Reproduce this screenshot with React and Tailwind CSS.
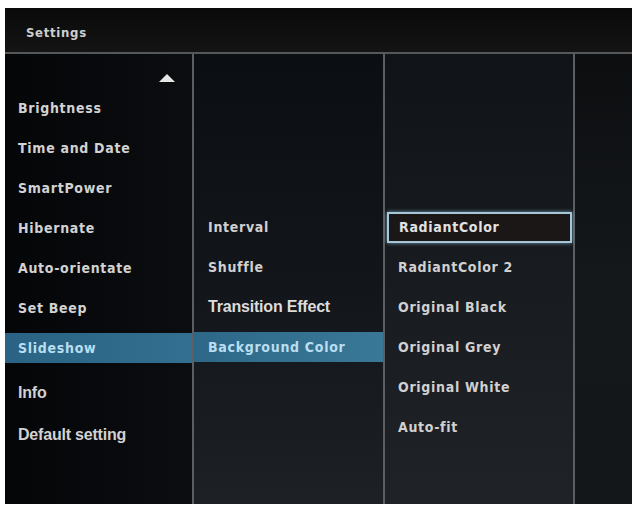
const main = [
  'Brightness',
  'Time and Date',
  'SmartPower',
  'Hibernate',
  'Auto-orientate',
  'Set Beep',
];

const sub = ['Interval', 'Shuffle'];

const colors = ['RadiantColor 2', 'Original Black', 'Original Grey', 'Original White', 'Auto-fit'];

const dv = { fontFamily: '"DejaVu Sans Condensed", "DejaVu Sans", sans-serif', fontStretch: 'condensed' };
const lib = { fontFamily: '"Liberation Sans", Arial, sans-serif' };

const Row = ({ children, className = '' }) => (
  <div className={`h-[30px] flex items-center ${className}`}>{children}</div>
);

export default function App() {
  return (
    <div className="w-[637px] h-[506px] bg-white pt-[8px] pl-[5px]">
      <div className="w-[627px] h-[496px] flex flex-col bg-[#0b0c0e] overflow-hidden">
        {/* header */}
        <div className="h-[46px] flex items-center pl-[21px] pt-[6px] bg-gradient-to-b from-[#0a0a0a] to-[#141414] border-b-2 border-[#55585b]">
          <span className="text-[13px] font-bold tracking-[0.7px] text-[#cfcfcf]" style={dv}>
            Settings
          </span>
        </div>

        <div className="flex flex-1">
          {/* main menu */}
          <div className="w-[189px] flex flex-col bg-gradient-to-r from-[#050608] to-[#0b0d10] border-r-2 border-[#5c5f62] text-[14px] font-bold tracking-[0.7px] text-[#d2d2d2]">
            <div className="h-[39px] flex items-center justify-end pr-[17px] pt-[8px]">
              <div className="w-0 h-0 border-l-[8px] border-r-[8px] border-b-[8px] border-l-transparent border-r-transparent border-b-[#e6e6e6]" />
            </div>
            <div className="flex flex-col gap-[10px]" style={dv}>
              {main.map((t) => (
                <Row key={t} className="pl-[13px]">{t}</Row>
              ))}
              <Row className="pl-[13px] bg-gradient-to-r from-[#2a6384] to-[#336f90] text-[#b9def0]">
                Slideshow
              </Row>
            </div>
            <Row className="pl-[13px] mt-[15px] text-[16px] tracking-[-0.2px]">
              <span style={lib}>Info</span>
            </Row>
            <Row className="pl-[13px] mt-[12px] text-[16px] tracking-[-0.2px]">
              <span style={lib}>Default setting</span>
            </Row>
          </div>

          {/* submenu */}
          <div className="w-[191px] flex flex-col pt-[158px] gap-[10px] bg-gradient-to-b from-[#0b0e13] via-[#12151a] to-[#1d2024] border-r-2 border-[#5c5f62] text-[14px] font-bold tracking-[0.7px] text-[#d0d0d0]">
            {sub.map((t) => (
              <Row key={t} className="pl-[14px]"><span style={dv}>{t}</span></Row>
            ))}
            <Row className="pl-[14px] text-[16px] tracking-[-0.2px] text-[#dcdcdc]">
              <span style={lib}>Transition Effect</span>
            </Row>
            <Row className="pl-[14px] bg-gradient-to-r from-[#2d6888] to-[#3a7898] text-[#b9def0]">
              <span style={dv}>Background Color</span>
            </Row>
          </div>

          {/* options */}
          <div className="w-[190px] flex flex-col pt-[158px] gap-[10px] bg-gradient-to-b from-[#101317] via-[#181b1f] to-[#1f2226] border-r-2 border-[#5c5f62] text-[14px] font-bold tracking-[0.7px] text-[#d0d0d0]" style={dv}>
            <div className="ml-[2px] mr-[1px] h-[31px] flex items-center pl-[10px] bg-[#1a1716] border-2 border-[#a9c6d8] shadow-[0_0_4px_#6f9bb8] text-[#e2e2e2]">
              RadiantColor
            </div>
            {colors.map((t) => (
              <Row key={t} className="pl-[13px] -mt-[1px] mb-[1px]">{t}</Row>
            ))}
          </div>

          {/* right strip */}
          <div className="flex-1 bg-gradient-to-b from-[#0c0e10] via-[#15181b] to-[#14171a]" />
        </div>
      </div>
    </div>
  );
}
